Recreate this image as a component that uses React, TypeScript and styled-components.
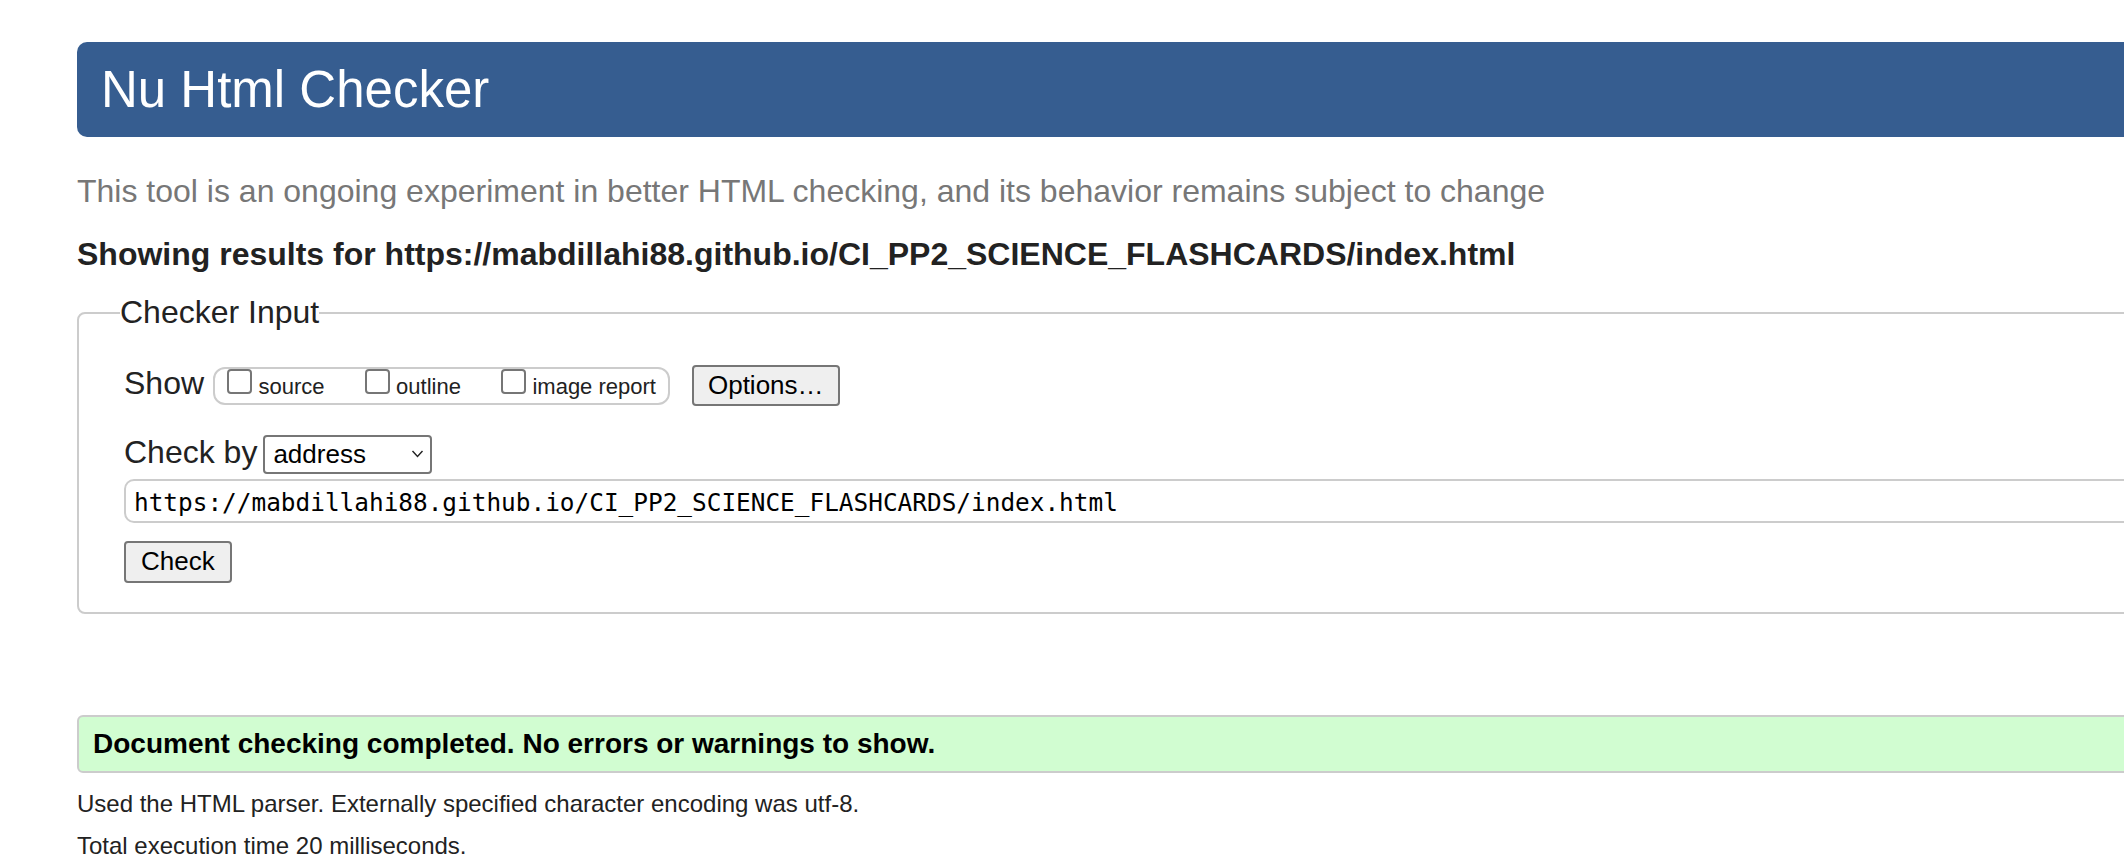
import React from "react";
import styled, { createGlobalStyle } from "styled-components";

const GlobalStyle = createGlobalStyle`
  html, body {
    margin: 0;
    padding: 0;
    overflow: hidden;
    background: #ffffff;
  }
  body {
    font-family: "Liberation Sans", Arial, sans-serif;
    color: #222222;
  }
  *, *::before, *::after {
    box-sizing: border-box;
  }
`;

const Page = styled.main`
  width: 2400px;
  padding: 42px 0 0 77px;
`;

const Banner = styled.header`
  height: 95px;
  background: #365d90;
  border-radius: 10px;
  display: flex;
  align-items: center;
  padding-left: 24px;
`;

const Title = styled.h1`
  margin: 0;
  font-size: 51px;
  font-weight: normal;
  line-height: 95px;
  color: #ffffff;
`;

const Tagline = styled.p`
  margin: 36px 0 0;
  font-size: 32px;
  color: #777777;
`;

const ResultsHeading = styled.h2`
  margin: 26px 0 0;
  font-size: 32px;
  font-weight: bold;
  color: #222222;
`;

const InputFieldset = styled.fieldset`
  margin: 21px 0 0;
  min-width: 0;
  border: 2px solid #cccccc;
  border-radius: 8px;
  padding: 0 0 29px 45px;
`;

const Legend = styled.legend`
  margin-left: -4px;
  padding: 0;
  font-size: 32px;
  color: #222222;
`;

const Row = styled.div<{ $top: number }>`
  display: flex;
  align-items: baseline;
  margin-top: ${(p) => p.$top}px;
`;

const RowLabel = styled.label<{ $gap: number }>`
  font-size: 32px;
  color: #222222;
  margin-right: ${(p) => p.$gap}px;
`;

const OptionGroup = styled.div`
  display: inline-flex;
  align-items: baseline;
  gap: 40px;
  height: 38px;
  border: 2px solid #cccccc;
  border-radius: 12px;
  padding: 0 12px 0 12px;
`;

const CheckOption = styled.label`
  display: inline-flex;
  align-items: baseline;
`;

const CheckBox = styled.input.attrs({ type: "checkbox" })`
  appearance: none;
  -webkit-appearance: none;
  width: 25px;
  height: 25px;
  margin: 0 6.5px 0 0;
  border: 2px solid #767676;
  border-radius: 4px;
  background: #ffffff;
`;

const OptionText = styled.span`
  font-size: 22px;
  color: #222222;
`;

const PlainButton = styled.button<{ $height: number; $pad: number }>`
  height: ${(p) => p.$height}px;
  padding: 0 ${(p) => p.$pad}px;
  font-family: "Liberation Sans", Arial, sans-serif;
  font-size: 26px;
  color: #000000;
  background: #efefef;
  border: 2px solid #767676;
  border-radius: 4px;
`;

const OptionsButton = styled(PlainButton)`
  margin-left: 22px;
`;

const CheckButton = styled(PlainButton)`
  display: block;
  margin-top: 18px;
`;

const SelectWrap = styled.span`
  position: relative;
  display: inline-block;
  margin-left: 6px;
`;

const Select = styled.select`
  appearance: none;
  -webkit-appearance: none;
  width: 169px;
  height: 39px;
  padding: 0 0 0 8px;
  font-family: "Liberation Sans", Arial, sans-serif;
  font-size: 26px;
  color: #000000;
  background: #ffffff;
  border: 2px solid #767676;
  border-radius: 4px;
`;

const Chevron = styled.svg`
  position: absolute;
  right: 8px;
  top: 50%;
  transform: translateY(-50%);
  pointer-events: none;
`;

const UrlInput = styled.input`
  display: block;
  margin-top: 5px;
  width: 2200px;
  height: 44px;
  padding: 3px 10px 0 8px;
  font-family: "DejaVu Sans Mono", "Liberation Mono", monospace;
  font-size: 24.4px;
  color: #000000;
  background: #ffffff;
  border: 2px solid #cccccc;
  border-radius: 10px;
`;

const SuccessBox = styled.p`
  margin: 101px 0 0;
  height: 58px;
  display: flex;
  align-items: center;
  padding-left: 14px;
  font-size: 28px;
  font-weight: bold;
  color: #000000;
  background: #d1fdd1;
  border: 2px solid #cccccc;
  border-radius: 6px;
`;

const Detail = styled.p<{ $top: number }>`
  margin: ${(p) => p.$top}px 0 0;
  font-size: 24px;
  color: #222222;
`;

const url = "https://mabdillahi88.github.io/CI_PP2_SCIENCE_FLASHCARDS/index.html";

export default function App() {
  return (
    <>
      <GlobalStyle />
      <Page>
        <Banner>
          <Title>Nu Html Checker</Title>
        </Banner>
        <Tagline>
          This tool is an ongoing experiment in better HTML checking, and its behavior remains
          subject to change
        </Tagline>
        <ResultsHeading>Showing results for {url}</ResultsHeading>

        <InputFieldset>
          <Legend>Checker Input</Legend>
          <Row $top={34}>
            <RowLabel $gap={9}>Show</RowLabel>
            <OptionGroup>
              <CheckOption>
                <CheckBox />
                <OptionText>source</OptionText>
              </CheckOption>
              <CheckOption>
                <CheckBox />
                <OptionText>outline</OptionText>
              </CheckOption>
              <CheckOption>
                <CheckBox />
                <OptionText>image report</OptionText>
              </CheckOption>
            </OptionGroup>
            <OptionsButton type="button" $height={41} $pad={14}>
              Options…
            </OptionsButton>
          </Row>
          <Row $top={28}>
            <RowLabel $gap={0}>Check by</RowLabel>
            <SelectWrap>
              <Select defaultValue="address">
                <option value="address">address</option>
                <option value="file">file upload</option>
                <option value="text">text input</option>
              </Select>
              <Chevron width="13" height="9" viewBox="0 0 13 9">
                <path d="M1.5 1.5 L6.5 7 L11.5 1.5" fill="none" stroke="#222" strokeWidth="1.4" />
              </Chevron>
            </SelectWrap>
          </Row>
          <UrlInput type="url" defaultValue={url} />
          <CheckButton type="button" $height={42} $pad={15}>
            Check
          </CheckButton>
        </InputFieldset>

        <SuccessBox>Document checking completed. No errors or warnings to show.</SuccessBox>
        <Detail $top={17}>
          Used the HTML parser. Externally specified character encoding was utf-8.
        </Detail>
        <Detail $top={14}>Total execution time 20 milliseconds.</Detail>
      </Page>
    </>
  );
}
